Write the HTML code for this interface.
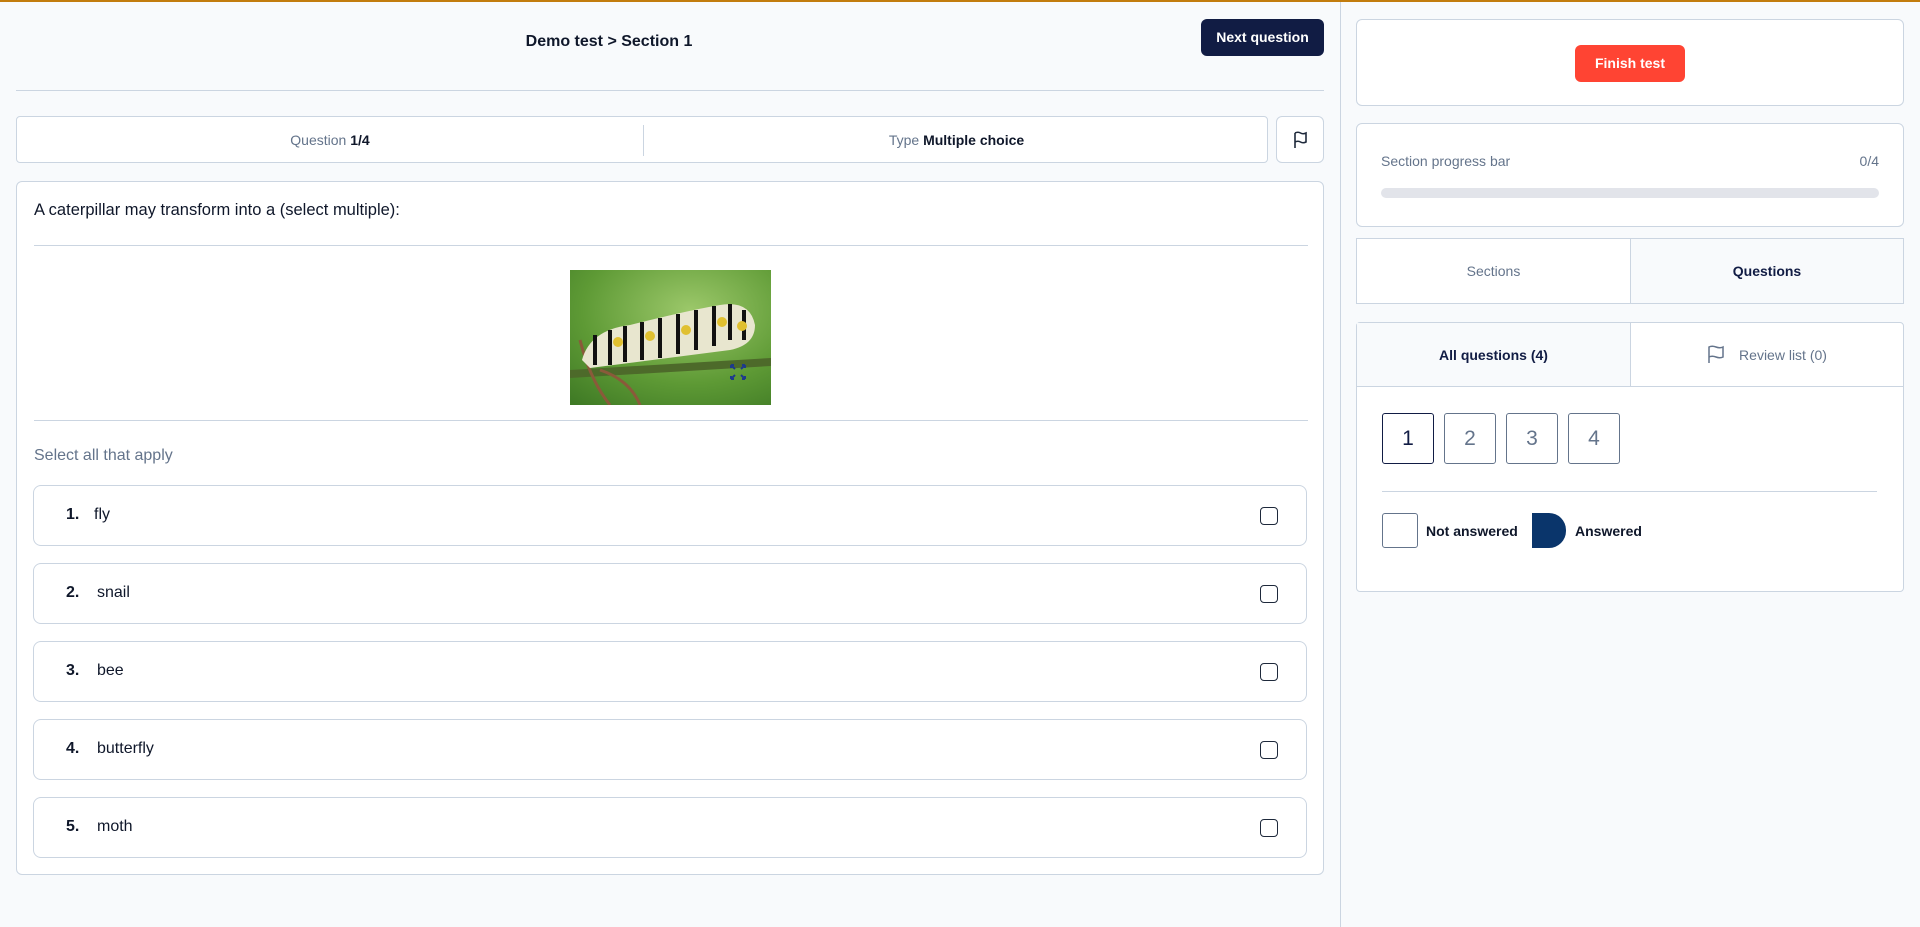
<!DOCTYPE html>
<html><head><meta charset="utf-8"><style>
*{box-sizing:border-box;margin:0;padding:0}
body{width:1920px;height:925px;background:#f8fafc;font-family:"Liberation Sans",sans-serif;color:#0f172a;position:relative;overflow:hidden;border-top:2px solid #c27c0e}
.a{position:absolute}
.card{position:absolute;background:#fff;border:1px solid #cbd5e1;border-radius:6px}
.opt{position:absolute;left:33px;width:1274px;height:61px;border:1px solid #cbd5e1;border-radius:8px;background:#fff}
.opt .n{position:absolute;left:32px;top:20px;font-size:16px;font-weight:bold}
.opt .t{position:absolute;left:60px;top:20px;font-size:16px}
.opt .c{position:absolute;right:28px;top:21px;width:18px;height:18px;border:1.5px solid #1e293b;border-radius:4px}
.num{position:absolute;top:411px;width:52px;height:51px;border:1px solid #64748b;border-radius:3px;font-size:21px;color:#64748b;text-align:center;line-height:49px}
</style></head><body>
<div class="a" style="left:0;top:0;width:1341px;height:925px;background:#f8fafc;border-right:1px solid #cbd5e1"></div>
<div class="a" style="left:0;top:31px;width:1218px;text-align:center;font-size:16px;font-weight:bold">Demo test &gt; Section 1</div>
<div class="a" style="left:1201px;top:17px;width:123px;height:37px;background:#111c44;border-radius:6px;color:#fff;font-size:14px;font-weight:bold;text-align:center;line-height:37px">Next question</div>
<div class="a" style="left:16px;top:88px;width:1308px;height:1px;background:#cbd5e1"></div>
<div class="card" style="left:16px;top:114px;width:1252px;height:47px;border-radius:4px">
<div class="a" style="left:0;top:15px;width:626px;text-align:center;font-size:14px;color:#64748b">Question <b style="color:#0f172a">1/4</b></div>
<div class="a" style="left:626px;top:8px;width:1px;height:31px;background:#cbd5e1"></div>
<div class="a" style="left:627px;top:15px;width:625px;text-align:center;font-size:14px;color:#64748b">Type <b style="color:#0f172a">Multiple choice</b></div>
</div>
<div class="card" style="left:1276px;top:114px;width:48px;height:47px">
<svg class="a" style="left:14px;top:13px" width="20" height="20" viewBox="0 0 20 20" fill="none" stroke="#1e293b" stroke-width="1.6"><path d="M4 18V3M4 3q3-1.5 5.5 0t5.5 0v9q-3 1.5-5.5 0t-5.5 0"/></svg></div>
<div class="card" style="left:16px;top:179px;width:1308px;height:694px">
<div class="a" style="left:17px;top:19px;font-size:16.5px">A caterpillar may transform into a (select multiple):</div>
<div class="a" style="left:17px;top:63px;width:1274px;height:1px;background:#cbd5e1"></div>
<svg class="a" style="left:553px;top:88px" width="201" height="135" viewBox="0 0 201 135">
<defs><radialGradient id="g" cx="0.6" cy="0.3" r="0.9"><stop offset="0" stop-color="#9cc86a"/><stop offset="0.6" stop-color="#5e9a35"/><stop offset="1" stop-color="#3f7a25"/></radialGradient></defs>
<rect width="201" height="135" fill="url(#g)"/>
<path d="M0 100 L201 88 L201 96 L0 108Z" fill="#4d6a2a"/>
<path d="M10 70 Q20 110 40 135 M30 100 Q60 110 70 135" stroke="#8a5a3a" stroke-width="3" fill="none"/>
<path d="M12 90 Q20 60 60 55 Q120 40 150 35 Q180 30 185 55 Q185 75 160 80 L20 98Z" fill="#e8e6cf"/>
<g stroke="#111" stroke-width="4"><path d="M25 65v30M40 60v35M55 56v36M72 52v38M90 48v40M108 44v40M126 40v40M144 36v40M160 34v36M174 40v30"/></g>
<g fill="#e0c030"><circle cx="48" cy="72" r="5"/><circle cx="80" cy="66" r="5"/><circle cx="116" cy="60" r="5"/><circle cx="152" cy="52" r="5"/><circle cx="172" cy="56" r="5"/></g>
<g stroke="#1e3a8a" stroke-width="2" fill="none"><path d="M161 95l4 4M161 95h3M161 95v3M175 95l-4 4M175 95h-3M175 95v3M161 109l4-4M161 109h3M161 109v-3M175 109l-4-4M175 109h-3M175 109v-3"/></g>
</svg>
<div class="a" style="left:17px;top:238px;width:1274px;height:1px;background:#cbd5e1"></div>
<div class="a" style="left:17px;top:265px;font-size:16px;color:#64748b">Select all that apply</div>
</div>
<div class="opt" style="top:483px"><span class="n">1.</span><span class="t" style="left:60px">fly</span><span class="c"></span></div>
<div class="opt" style="top:561px"><span class="n">2.</span><span class="t" style="left:63px">snail</span><span class="c"></span></div>
<div class="opt" style="top:639px"><span class="n">3.</span><span class="t" style="left:63px">bee</span><span class="c"></span></div>
<div class="opt" style="top:717px"><span class="n">4.</span><span class="t" style="left:63px">butterfly</span><span class="c"></span></div>
<div class="opt" style="top:795px"><span class="n">5.</span><span class="t" style="left:63px">moth</span><span class="c"></span></div>

<div class="card" style="left:1356px;top:17px;width:548px;height:87px">
<div class="a" style="left:218px;top:25px;width:110px;height:37px;background:#ff4433;border-radius:6px;color:#fff;font-size:14px;font-weight:bold;text-align:center;line-height:37px">Finish test</div></div>
<div class="card" style="left:1356px;top:121px;width:548px;height:104px">
<div class="a" style="left:24px;top:29px;font-size:14px;color:#64748b">Section progress bar</div>
<div class="a" style="right:24px;top:29px;font-size:14px;color:#64748b">0/4</div>
<div class="a" style="left:24px;top:64px;width:498px;height:10px;background:#e2e4ea;border-radius:5px"></div></div>
<div class="a" style="left:1356px;top:236px;width:548px;height:66px;border:1px solid #cbd5e1;background:#fff">
<div class="a" style="left:0;top:0;width:273px;height:64px;text-align:center;line-height:64px;font-size:14px;color:#64748b">Sections</div>
<div class="a" style="left:273px;top:0;width:273px;height:64px;background:#f8fafc;border-left:1px solid #cbd5e1;text-align:center;line-height:64px;font-size:14px;font-weight:bold;color:#111c44">Questions</div></div>
<div class="card" style="left:1356px;top:320px;width:548px;height:270px;border-radius:4px">
<div class="a" style="left:0;top:0;width:273px;height:64px;background:#f8fafc;border-bottom:1px solid #cbd5e1;text-align:center;line-height:64px;font-size:14px;font-weight:bold;color:#111c44">All questions (4)</div>
<div class="a" style="left:273px;top:0;width:273px;height:64px;border-left:1px solid #cbd5e1;border-bottom:1px solid #cbd5e1;text-align:center;line-height:64px;font-size:14px;color:#64748b"><svg style="vertical-align:-4px;margin-right:14px" width="18" height="20" viewBox="0 0 18 20" fill="none" stroke="#64748b" stroke-width="1.5"><path d="M2 19V3q3-1.5 7 0t7 0v10q-3 1.5-7 0t-7 0"/></svg>Review list (0)</div></div>
<div class="num" style="left:1382px;border-color:#111c44;color:#111c44">1</div>
<div class="num" style="left:1444px">2</div>
<div class="num" style="left:1506px">3</div>
<div class="num" style="left:1568px">4</div>
<div class="a" style="left:1382px;top:489px;width:495px;height:1px;background:#cbd5e1"></div>
<div class="a" style="left:1382px;top:511px;width:36px;height:35px;border:1px solid #64748b;border-radius:3px;background:#fff"></div>
<div class="a" style="left:1426px;top:521px;font-size:14px;font-weight:bold">Not answered</div>
<div class="a" style="left:1532px;top:511px;width:34px;height:35px;background:#0a356b;border-radius:0 17px 17px 0"></div>
<div class="a" style="left:1575px;top:521px;font-size:14px;font-weight:bold">Answered</div>
</body></html>
